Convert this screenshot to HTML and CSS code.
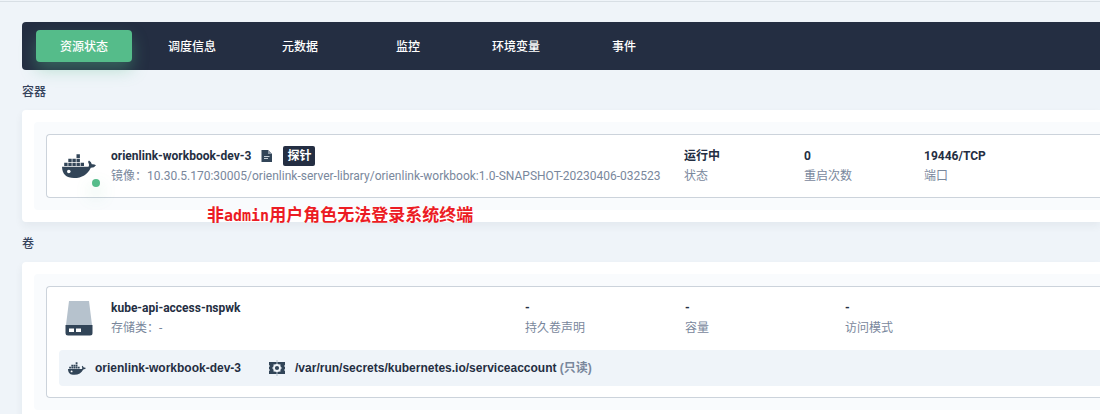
FILE: index.html
```html
<!DOCTYPE html>
<html lang="zh-CN">
<head>
<meta charset="utf-8">
<title>资源状态</title>
<link rel="stylesheet" href="styles.css">
</head>
<body>
<svg class="symbols" aria-hidden="true">
  <symbol id="docker" viewBox="0 0 34 24">
    <path d="M0 12.800H26.500C27.300 11.700 27.200 10.300 26.300 8.800Q25.700 7.500 27 6.600Q29.500 8.200 29.800 10.300Q32 9.900 34 11.200Q32.300 13.800 28.800 13.700C25.500 20.500 20 24 12 24C4.500 24 .3 20.500 0 12.800Z"/>
    <path d="M2.200 8.800h3.400v3.200H2.200zM6.300 8.800h3.400v3.200H6.300zM10.400 8.800h3.400v3.200h-3.400zM14.500 8.800h3.400v3.200h-3.400zM18.600 8.800h3.400v3.200h-3.400zM6.300 4.700h3.400v3.400H6.300zM10.400 4.700h3.400v3.400h-3.400zM14.500 4.700h3.400v3.400h-3.400zM14.500 .3h3.400v3.600h-3.400z"/>
    <circle cx="6.800" cy="17.500" r="1.800" fill="#fff"/>
  </symbol>
</svg>
<main class="page">
  <nav class="tabs">
    <button class="tab tab-active" type="button">资源状态</button>
    <button class="tab" type="button">调度信息</button>
    <button class="tab" type="button">元数据</button>
    <button class="tab" type="button">监控</button>
    <button class="tab" type="button">环境变量</button>
    <button class="tab" type="button">事件</button>
  </nav>

  <section class="section">
    <h2 class="section-title">容器</h2>
    <div class="panel">
      <div class="panel-inner">
        <article class="card">
          <div class="row row-container">
            <div class="row-icon">
              <svg class="icon-docker" width="34" height="24"><use href="#docker"/></svg>
              <span class="status-dot"></span>
            </div>
            <div class="cell">
              <div class="cell-title">
                <span>orienlink-workbook-dev-3</span>
                <svg class="icon-log" width="12" height="12" viewBox="0 0 12 12"><path d="M.5 0H7l4 4v8H.5z" fill="#324558"/><path d="M7 0l4 4H7z" fill="#8b98a6"/><path d="M3 6.500h5.500M3 8.500h4" stroke="#c5ced6" fill="none"/></svg>
                <span class="tag">探针</span>
              </div>
              <p class="cell-note">镜像：10.30.5.170:30005/orienlink-server-library/orienlink-workbook:1.0-SNAPSHOT-20230406-032523</p>
            </div>
            <div class="cell"><div class="cell-title">运行中</div><p class="cell-note">状态</p></div>
            <div class="cell"><div class="cell-title">0</div><p class="cell-note">重启次数</p></div>
            <div class="cell"><div class="cell-title">19446/TCP</div><p class="cell-note">端口</p></div>
          </div>
        </article>
      </div>
      <p class="annotation">非<span class="annotation-latin">admin</span>用户角色无法登录系统终端</p>
    </div>
  </section>

  <section class="section">
    <h2 class="section-title">卷</h2>
    <div class="panel">
      <div class="panel-inner">
        <article class="card">
          <div class="row row-volume">
            <div class="row-icon">
              <svg width="28" height="35" viewBox="0 0 28 35"><path d="M4 0h20l3 24H1z" fill="#b6c2cd"/><path d="M.5 24h27v8q0 2.500-2.500 2.500H3Q.5 34.500.5 32z" fill="#324558"/><path d="M4 27.500h5v3.500H4zM11 27.500h5v3.500h-5z" fill="#fff"/></svg>
            </div>
            <div class="cell"><div class="cell-title">kube-api-access-nspwk</div><p class="cell-note">存储类：-</p></div>
            <div class="cell"><div class="cell-title">-</div><p class="cell-note">持久卷声明</p></div>
            <div class="cell"><div class="cell-title">-</div><p class="cell-note">容量</p></div>
            <div class="cell"><div class="cell-title">-</div><p class="cell-note">访问模式</p></div>
          </div>
          <div class="mounts">
            <svg class="icon-docker" width="18" height="13"><use href="#docker"/></svg>
            <span class="mount-name">orienlink-workbook-dev-3</span>
            <svg width="16" height="16" viewBox="0 0 16 16"><path d="M0 2h16v3.500h-1v1h1v3h-1v1h1V14H0v-3.500h1v-1H0v-3h1v-1H0z" fill="#324558"/><path d="M7.500 0h1v3h-1zM7.500 13h1v3h-1z" fill="#b6c2cd"/><path d="M8 3.200v9.600M3.200 8h9.600M4.600 4.600l6.800 6.800M11.400 4.600l-6.800 6.800" stroke="#b6c2cd" stroke-width="1.400"/><circle cx="8" cy="8" r="3" fill="#324558" stroke="#eff4f9" stroke-width="1.800"/></svg>
            <span class="mount-path">/var/run/secrets/kubernetes.io/serviceaccount <span class="mount-mode">(只读)</span></span>
          </div>
        </article>
      </div>
    </div>
  </section>
</main>
</body>
</html>
```
FILE: styles.css
```css
* { box-sizing: border-box; }

body {
  margin: 0;
  overflow: hidden;
  background: #eff4f9;
  color: #242e42;
  font-family: Roboto, "Noto Sans CJK SC", sans-serif;
  font-size: 12px;
  line-height: 20px;
}

h2, p { margin: 0; }
svg { display: block; flex: none; }
.symbols { position: absolute; width: 0; height: 0; }

.page {
  margin-top: 1px;
  padding: 20px 0 0 22px;
  border-top: 1px solid #d8dfe5;
}

.tabs {
  display: flex;
  gap: 12px;
  padding: 8px 14px;
  background: #242e42;
  border-radius: 4px 0 0 4px;
}

.tab {
  width: 96px;
  height: 32px;
  padding: 2px 0 0;
  border: 0;
  border-radius: 4px;
  background: transparent;
  color: #fff;
  font: inherit;
  font-weight: 500;
}

.tab-active {
  background: #55bc8a;
  box-shadow: 0 8px 16px 0 rgba(85, 188, 138, 0.36);
}

.section-title {
  padding: 12px 0 8px;
  color: #36435c;
  font-size: 12px;
  font-weight: 500;
  line-height: 20px;
}

.panel {
  position: relative;
  padding: 12px 0 12px 12px;
  background: #fff;
  border-radius: 4px 0 0 4px;
  box-shadow: 0 4px 8px 0 rgba(36, 46, 66, 0.06);
}

.panel-inner {
  padding: 12px 0 12px 12px;
  background: #f9fbfd;
  border-radius: 4px 0 0 4px;
}

.card {
  padding: 11px 0 11px 12px;
  background: #fff;
  border: 1px solid #ccd3db;
  border-right: 0;
  border-radius: 4px 0 0 4px;
}

.row { display: grid; }
.row-container { grid-template-columns: 52px minmax(0, 573px) 120px 120px 1fr; }
.row-volume { grid-template-columns: 52px minmax(0, 414px) 160px 160px 1fr; }

.row-icon {
  position: relative;
  display: flex;
  align-items: center;
  justify-content: center;
  width: 40px;
  height: 40px;
}

.icon-docker { fill: #324558; }

.status-dot {
  position: absolute;
  right: -1px;
  bottom: -1px;
  width: 8px;
  height: 8px;
  border-radius: 50%;
  background: #55bc8a;
  box-shadow: 0 8px 16px 0 rgba(85, 188, 138, 0.36);
}

.cell { white-space: nowrap; }

.cell-title {
  display: flex;
  align-items: center;
  height: 20px;
  font-weight: 700;
}

.cell-note { color: #79879c; }
.icon-log { margin: 0 10px; }

.tag {
  padding: 0 4px;
  border-radius: 2px;
  background: #242e42;
  color: #fff;
}

.annotation {
  position: absolute;
  left: 185px;
  bottom: -3px;
  color: #ec1c24;
  font-family: "Noto Sans CJK SC", sans-serif;
  font-size: 17px;
  font-weight: 700;
  line-height: 18px;
}

.annotation-latin {
  font-family: "DejaVu Sans Mono", monospace;
  font-size: 15px;
}

.mounts {
  display: flex;
  align-items: center;
  height: 36px;
  margin-top: 12px;
  padding-left: 9px;
  background: #eff4f9;
  border-radius: 4px 0 0 4px;
  font-family: "Liberation Sans", "Noto Sans CJK SC", sans-serif;
  font-weight: 700;
}

.mount-name { margin: 0 28px 0 9px; }
.mount-path { margin-left: 10px; }
.mount-mode { color: #79879c; }
```
